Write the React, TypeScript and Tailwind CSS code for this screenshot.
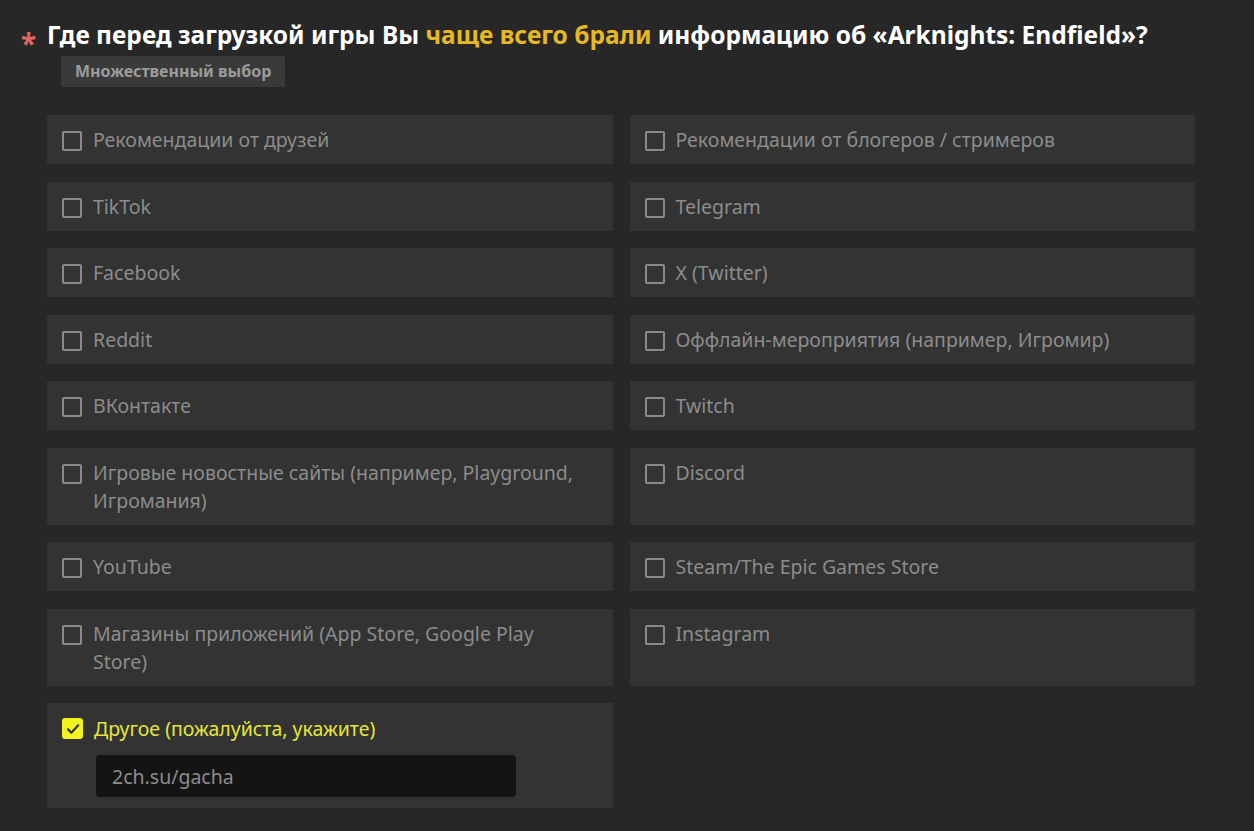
import { useState } from "react";

// Вопрос анкеты: множественный выбор источников информации
const OPTIONS: { key: string; label: string }[] = [
  { key: "friends", label: "Рекомендации от друзей" },
  { key: "bloggers", label: "Рекомендации от блогеров / стримеров" },
  { key: "tiktok", label: "TikTok" },
  { key: "telegram", label: "Telegram" },
  { key: "facebook", label: "Facebook" },
  { key: "x", label: "X (Twitter)" },
  { key: "reddit", label: "Reddit" },
  { key: "offline", label: "Оффлайн-мероприятия (например, Игромир)" },
  { key: "vk", label: "ВКонтакте" },
  { key: "twitch", label: "Twitch" },
  { key: "news", label: "Игровые новостные сайты (например, Playground, Игромания)" },
  { key: "discord", label: "Discord" },
  { key: "youtube", label: "YouTube" },
  { key: "steam", label: "Steam/The Epic Games Store" },
  { key: "stores", label: "Магазины приложений (App Store, Google Play Store)" },
  { key: "instagram", label: "Instagram" },
];

function Box({ checked }: { checked: boolean }) {
  return checked ? (
    <span className="mt-[3px] flex h-[21px] w-[21px] shrink-0 items-center justify-center rounded-[3px] bg-[#f2f21e]">
      <svg viewBox="0 0 16 16" className="h-[16px] w-[16px]" fill="none" stroke="#2a2a2a" strokeWidth={2} strokeLinecap="round" strokeLinejoin="round">
        <path d="M3 8.3l3.3 3.4L13.2 4.3" />
      </svg>
    </span>
  ) : (
    <span className="mt-[5px] h-[20px] w-[20px] shrink-0 rounded-[2px] border-2 border-[#8a8a8a]" />
  );
}

export default function App() {
  const [checked, setChecked] = useState<Record<string, boolean>>({});
  const [other, setOther] = useState("2ch.su/gacha");

  const toggle = (k: string) => setChecked((p) => ({ ...p, [k]: !p[k] }));

  return (
    <div className="min-h-[831px] bg-[#272727] font-['Noto_Sans','Open_Sans',sans-serif]">
      <div className="w-[1195px] pl-[47px] pt-[19px]">
        {/* Заголовок */}
        <div className="relative">
          <span className="absolute left-[-26px] top-[10px] text-[28px] font-bold leading-[28px] text-[#e5655c]">*</span>
          <h1 className="text-[24.5px] font-bold leading-[32px] text-white">
            Где перед загрузкой игры Вы <span className="text-[#e8b820]">чаще всего брали</span> информацию об «Arknights: Endfield»?
          </h1>
        </div>
        <div className="ml-[14px] mt-[5px] inline-block rounded-[2px] bg-[#3a3a3a] px-[14px] py-[4px] text-[16px] font-bold leading-[23px] text-[#9b9b9b]">
          Множественный выбор
        </div>

        {/* Варианты ответа */}
        <div className="mt-[28px] grid grid-cols-2 gap-x-[17px] gap-y-[17.5px]">
          {OPTIONS.map((o) => (
            <button
              key={o.key}
              type="button"
              onClick={() => toggle(o.key)}
              className="flex items-start gap-[11px] bg-[#333333] pb-[10px] pl-[15px] pr-[28px] pt-[11px] text-left"
            >
              <Box checked={!!checked[o.key]} />
              <span className="text-[19.5px] leading-[28px] text-[#8c8c8c]">{o.label}</span>
            </button>
          ))}

          {/* Другое — с полем ввода */}
          <div className="bg-[#333333] pb-[11px] pl-[15px] pr-[96px] pt-[12px]">
            <div className="flex items-start gap-[11px]">
              <Box checked={true} />
              <span className="text-[19.5px] leading-[28px] text-[#e6e636]">Другое (пожалуйста, укажите)</span>
            </div>
            <input
              value={other}
              onChange={(e) => setOther(e.target.value)}
              className="ml-[34px] mt-[12px] h-[42px] w-[420px] rounded-[4px] bg-[#141414] px-[16px] text-[19.5px] text-[#8c8c8c] outline-none"
            />
          </div>
        </div>
      </div>
    </div>
  );
}
